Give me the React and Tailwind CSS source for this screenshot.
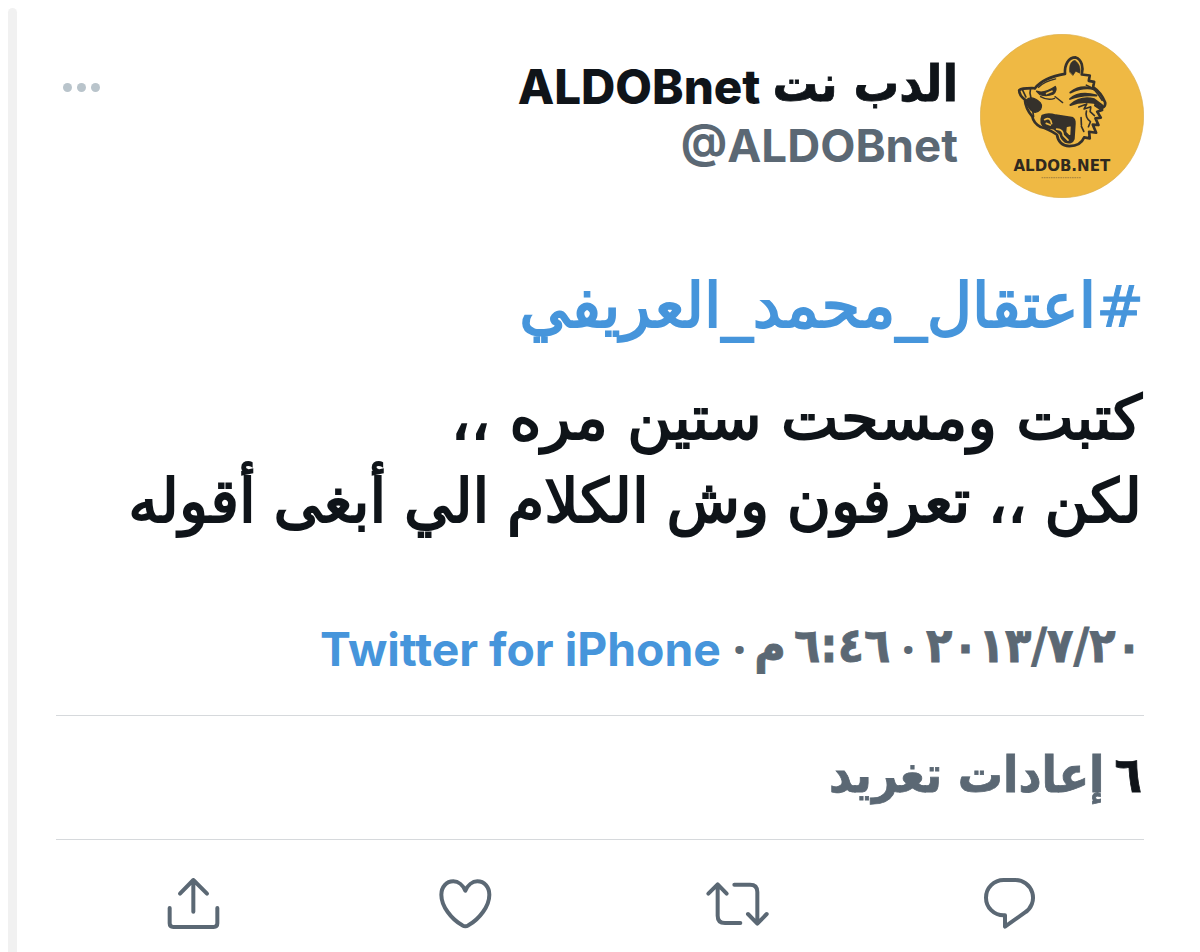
const LINK = 'text-[#4695db]'
const ARABIC = "font-['DejaVu_Sans',sans-serif]"
const ARABIC_BOLD = "font-['DejaVu_Sans_Condensed','DejaVu_Sans',sans-serif] font-bold [font-stretch:semi-condensed] [-webkit-text-stroke:0.8px_currentColor]"
const LATIN = "font-[Inter,sans-serif]"

function Avatar() {
  return (
    <svg className="h-[164px] w-[164px] shrink-0" viewBox="32 28 490 490" fill="none" direction="ltr">
      <circle cx="277" cy="273" r="244" fill="#efb944" stroke="#dcae48" strokeWidth="2" />
      <g stroke="#35312b" strokeWidth="8" strokeLinejoin="round" strokeLinecap="round">
        {/* Head outline */}
        <path d="M196 190 Q222 158 286 147 C284 120 296 98 318 98 C336 104 342 128 336 149 L360 152 L357 168 L373 171 L370 187 Q394 203 406 233 Q408 244 398 248 L377 241" />
        <path d="M377 241 L397 255 L382 260 L393 278 L377 280 L386 300 L369 299 L379 323 L358 320 L360 340 L343 337 Q333 362 299 363 Q267 361 262 329 Q235 311 213 306 Q192 295 188 274 Q168 251 166 224 Q149 211 149 196 Q157 189 196 190" />
        {/* Ear */}
        <path d="M300 141 C298 122 304 108 316 107 C330 118 333 133 330 145 L318 139 L310 151 Z" fill="#35312b" strokeWidth="2" />
        {/* Nose */}
        <path d="M170 225 Q186 211 207 229 Q220 238 213 253 Q201 266 190 260 Q173 249 170 225 Z" fill="#35312b" strokeWidth="4" />
        <path d="M159 195 L169 216 M183 192 Q179 204 184 218 M190 260 L192 275" strokeWidth="5" />
        {/* Eye and brow */}
        <path d="M201 199 Q223 208 257 185 Q264 196 250 208 Q231 216 211 209 Z" fill="#35312b" strokeWidth="4" />
        <path d="M207 187 Q225 169 258 162 M213 215 Q235 228 255 220 M256 215 L279 233" strokeWidth="4" />
        <path d="M231 206 L247 199" stroke="#efb944" strokeWidth="5" />
        {/* Mouth */}
        <path d="M219 273 Q234 265 258 272 L306 279 Q315 283 314 296 L311 341 Q306 356 287 349 Q276 341 273 326 L252 309 L226 306 Q211 294 219 273 Z" fill="#35312b" />
        <path d="M225 284 Q243 274 246 296 M230 295 L242 300 M261 312 Q281 313 281 331 L295 345" stroke="#efb944" strokeWidth="5" />
        <path d="M293 308 L301 306 L300 328 L292 320 Z" fill="#efb944" stroke="#efb944" strokeWidth="4" />
        {/* Fur stripes */}
        <path d="M302 203 Q334 178 373 193 Q342 184 302 203 Z M301 222 Q330 198 380 212 Q338 207 301 222 Z M302 240 Q333 213 373 223 L397 241 Q347 222 302 240 Z" fill="#35312b" strokeWidth="6" />
        <path d="M350 181 Q375 188 397 226 M327 246 L351 237 L343 252 L361 246 M350 258 Q345 277 362 290 L356 305 M363 246 L361 260 L374 272 M335 304 L342 319 M334 278 L335 300" strokeWidth="5" />
      </g>
      <text
        x="132"
        y="438"
        textLength="289"
        lengthAdjust="spacingAndGlyphs"
        className="font-['DejaVu_Sans',sans-serif] text-[45px] font-bold"
        fill="#30291f"
      >
        ALDOB.NET
      </text>
      <path d="M216 457 H334" stroke="#b18a3e" strokeWidth="4" strokeDasharray="5 2" />
    </svg>
  )
}

function Icon({ children }) {
  return (
    <button className="flex justify-center">
      <svg
        className="h-18 w-18"
        viewBox="0 0 216 216"
        fill="none"
        stroke="#5b6874"
        strokeWidth="12"
        strokeLinecap="round"
        strokeLinejoin="round"
      >
        {children}
      </svg>
    </button>
  )
}

function Header() {
  return (
    <header className="flex h-[164px] justify-between" dir="rtl">
      <div className="flex gap-[22px]">
        <Avatar />
        <div className="flex flex-col items-start pt-5 whitespace-nowrap">
          <h1 className="flex h-16 items-center gap-3 text-[#0f1419]">
            <span className={`${ARABIC_BOLD} -mt-1 text-[50.5px]`}>الدب نت</span>
            <span className={`${LATIN} mt-0.5 text-[47.5px] font-extrabold`}>ALDOBnet</span>
          </h1>
          <p dir="ltr" className={`${LATIN} flex h-14 items-center text-[45.7px] font-bold text-[#5b6874]`}>
            @ALDOBnet
          </p>
        </div>
      </div>
      <button className="mt-[49px] ml-[7px] flex h-[9px] gap-[5px]">
        <i className="h-[9px] w-[9px] rounded-full bg-[#b9c4cb]" />
        <i className="h-[9px] w-[9px] rounded-full bg-[#b9c4cb]" />
        <i className="h-[9px] w-[9px] rounded-full bg-[#b9c4cb]" />
      </button>
    </header>
  )
}

function App() {
  return (
    <div className="flex h-[952px] w-[1200px] overflow-hidden bg-white">
      <div className="mt-2 ml-2 w-[9px] shrink-0 rounded-t-full bg-[#f1f1f1]" />
      <main className="ml-[39px] w-[1088px] pt-[34px]">
        <Header />

        <div dir="rtl" className={`${ARABIC} flex flex-col items-start pt-[66px] pr-0.5 text-[60px] whitespace-nowrap text-[#0f1419] [-webkit-text-stroke:2px_currentColor]`}>
          <p className={`${LINK} -mr-0.5 h-[84px] text-[62.5px] leading-[84px]`}>
            <span className="text-[57px] [-webkit-text-stroke:1px_currentColor]">#</span>اعتقال_محمد_العريفي
          </p>
          <p className="mt-[26px] h-[84px] text-[61px] leading-[88px]">كتبت ومسحت ستين مره ،،</p>
          <p className="h-[84px] leading-[86px] [word-spacing:-1.5px] text-[60.3px]">لكن ،، تعرفون وش الكلام الي أبغى أقوله</p>
        </div>

        <div dir="rtl" className="mt-[61px] flex h-[112px] items-start pr-0.5 text-[48px] leading-[84px] whitespace-nowrap text-[#5b6874]">
          <span className={`${ARABIC_BOLD} tracking-[-1px]`}>٢٠١٣/٧/٢٠</span>
          <span className="mx-[11px] mt-1 font-bold">·</span>
          <span className={`${ARABIC_BOLD} tracking-[-4px]`}>٦:٤٦</span>
          <span className={`${ARABIC_BOLD} mr-2`}>م</span>
          <span className="mr-2 ml-3 mt-1 font-bold">·</span>
          <span className={`${LATIN} ${LINK} mt-1 text-[46.3px] font-bold`}>Twitter for iPhone</span>
        </div>

        <div dir="rtl" className={`${ARABIC_BOLD} flex h-[125px] items-center gap-2.5 border-y border-[#d6d9dc] pr-0.5 pb-1 text-[50px] whitespace-nowrap text-[#5b6874]`}>
          <span className="text-[#0f1419]">٦</span>
          <span>إعادات تغريد</span>
        </div>

        <div className="grid grid-cols-4 pt-7">
          <Icon>
            <path d="M112 131 V36 M72 77 L112 36 L153 77" />
            <path d="M41 120 V166 Q41 177 52 177 H173 Q184 177 184 166 V120" />
          </Icon>
          <Icon>
            <path d="M112 68 C105 52 91 40 76 40 C55 40 40 57 40 80 C40 115 70 153 103 172 Q112 178 121 172 C154 153 184 115 184 80 C184 57 169 40 148 40 C133 40 119 52 112 68 Z" />
          </Icon>
          <Icon>
            <path d="M25 77 L53 49 L80 77 M53 51 V143 Q53 165 75 165 H121" />
            <path d="M103 50 H150 Q172 50 172 72 V166 M144 138 L172 167 L200 138" />
          </Icon>
          <Icon>
            <path d="M95 36 H129 A53 53 0 0 1 158 134 L99 176 V142 H95 A53 53 0 0 1 95 36 Z" />
          </Icon>
        </div>
      </main>
    </div>
  )
}

export default App
